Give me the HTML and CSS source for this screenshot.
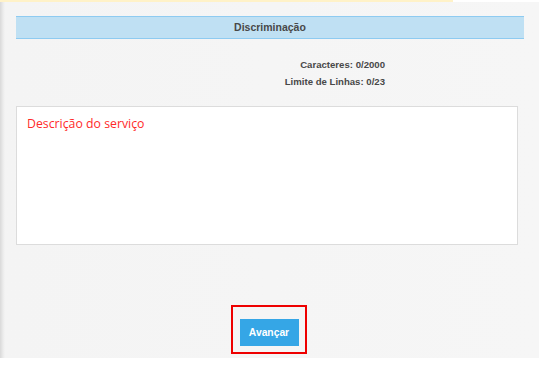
FILE: index.html
```html
<!DOCTYPE html>
<html lang="pt">
<head>
    <meta charset="UTF-8">
    <meta name="viewport" content="width=device-width, initial-scale=1.0">
    <title>Discriminação</title>
    <link rel="stylesheet" href="styles.css">
</head>
<body>
    <div class="top-line"></div>
    <div class="page">
        <div class="section-title">Discriminação</div>

        <div class="counters">
            <p>Caracteres: <span id="charCount">0</span>/2000</p>
            <p>Limite de Linhas: <span id="lineCount">0</span>/23</p>
        </div>

        <textarea id="descricao" class="description" placeholder="Descrição do serviço"></textarea>

        <div class="actions">
            <div class="highlight">
                <button class="btn-next">Avançar</button>
            </div>
        </div>
    </div>
</body>
</html>
```

FILE: styles.css
```css
* {
    margin: 0;
    padding: 0;
    box-sizing: border-box;
}

body {
    background: #fff;
    font-family: 'Liberation Sans', Arial, sans-serif;
    color: #444;
}

.top-line {
    width: 453px;
    height: 2px;
    background: #fff2c8;
}

.page {
    height: 356px;
    padding: 14px 15px 0 16px;
    background: linear-gradient(to right, #d9d9d9, #ebebeb 3px, #f4f4f4 5px, #f6f6f6);
}

.section-title {
    height: 23px;
    line-height: 21px;
    border-top: 1px solid #8ecbf1;
    border-bottom: 1px solid #8ecbf1;
    background: #bfe0f3;
    text-align: center;
    font-size: 10.5px;
    font-weight: bold;
    color: #484848;
}

.counters {
    margin-top: 17px;
    padding-right: 139px;
    text-align: right;
    font-size: 9.6px;
    font-weight: bold;
    line-height: 17px;
    color: #484848;
}

.description {
    display: block;
    width: 502px;
    height: 139px;
    margin-top: 16px;
    padding: 8px 10px;
    border: 1px solid #dcdcdc;
    background: #fff;
    resize: none;
    outline: none;
    font-family: 'Open Sans', 'DejaVu Sans', sans-serif;
    font-size: 12.3px;
}

.description::placeholder {
    color: #ff2a2a;
    opacity: 1;
}

.actions {
    display: flex;
    justify-content: center;
    margin-top: 60px;
    margin-left: -3px;
}

.highlight {
    padding: 12px 6px 6px 7px;
    border: 2px solid #ee0000;
}

.btn-next {
    display: block;
    width: 59px;
    height: 27px;
    border: none;
    background: #35a6e6;
    color: #fff;
    font-family: 'Liberation Sans', Arial, sans-serif;
    font-size: 10.3px;
    font-weight: bold;
    cursor: pointer;
}
```
